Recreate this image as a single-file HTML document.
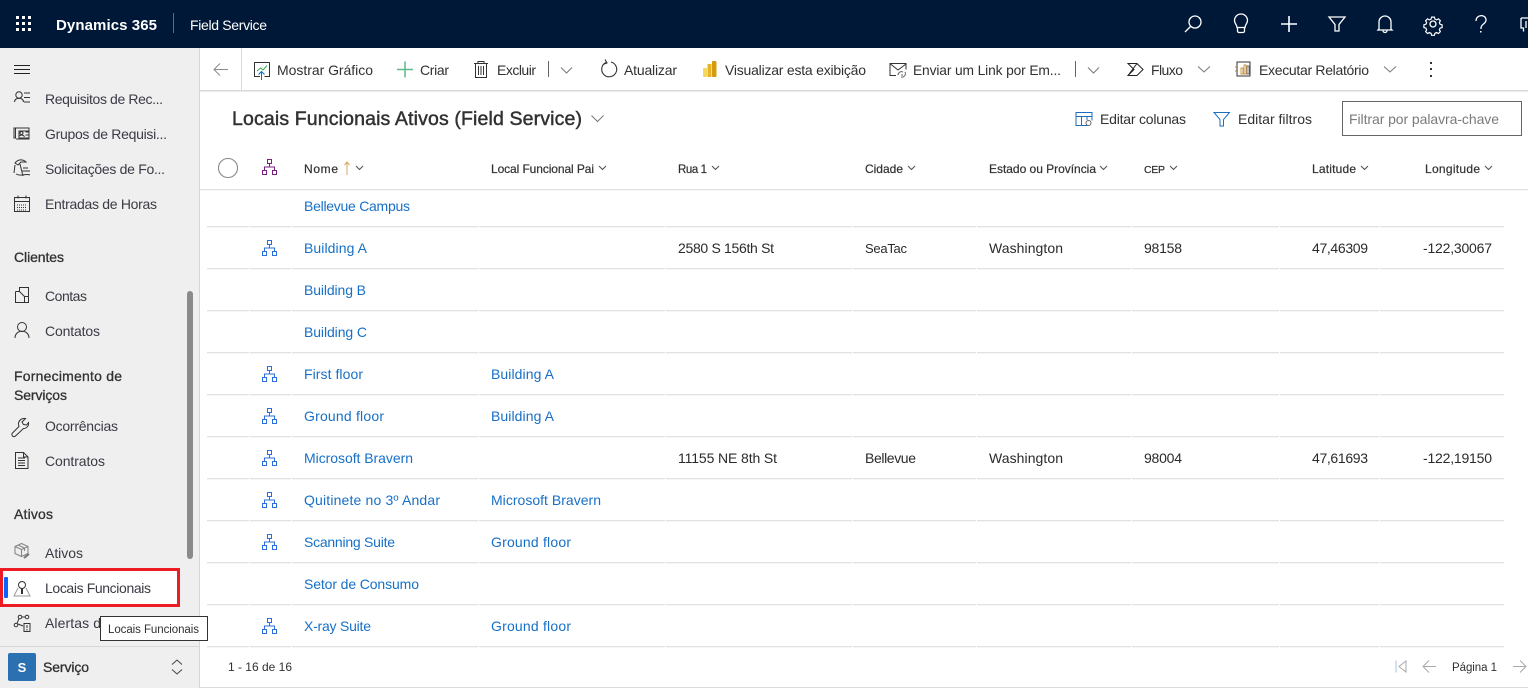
<!DOCTYPE html>
<html lang="pt-BR">
<head>
<meta charset="utf-8">
<title>Locais Funcionais Ativos (Field Service)</title>
<style>
html,body{margin:0;padding:0;width:1528px;height:688px;overflow:hidden;background:#fff}
svg{display:block}
text{font-family:"Liberation Sans",sans-serif;font-size:14px;fill:#323130;white-space:pre}
.nav{fill:#3b3a45}
.sec{fill:#323130;stroke:#323130;stroke-width:.3}
.lnk{fill:#1770c7}
.th{font-size:12px;stroke:#323130;stroke-width:.2}
.cell{fill:#2b2a29}
.ic{fill:none;stroke:#333;stroke-width:1}
.w{fill:none;stroke:#fff;stroke-width:1.3}
.chev{fill:none;stroke:#777;stroke-width:1}
.chd{fill:none;stroke:#555;stroke-width:1.1}
</style>
</head>
<body>
<svg width="1528" height="688" viewBox="0 0 1528 688" xmlns="http://www.w3.org/2000/svg">
<defs>
<symbol id="h" viewBox="0 0 16 16" overflow="visible">
<path fill="none" stroke="currentColor" stroke-width="1" d="M5.5 .5h4v4h-4zM.5 11.5h4v4h-4zM10.5 11.5h4v4h-4zM7.5 4.5v3.5M2.5 11.5V8h10v3.5"/>
</symbol>
</defs>

<!-- top bar -->
<rect width="1528" height="48" fill="#001838"/>
<g fill="#fff">
<rect x="16" y="16" width="3" height="3"/><rect x="22" y="16" width="3" height="3"/><rect x="28" y="16" width="3" height="3"/>
<rect x="16" y="22" width="3" height="3"/><rect x="22" y="22" width="3" height="3"/><rect x="28" y="22" width="3" height="3"/>
<rect x="16" y="28" width="3" height="3"/><rect x="22" y="28" width="3" height="3"/><rect x="28" y="28" width="3" height="3"/>
</g>
<text x="56" y="30" style="font-size:15px;fill:#fff;font-weight:700" textLength="101">Dynamics 365</text>
<rect x="173" y="13" width="1" height="20" fill="#5d6b80"/>
<text x="190" y="30" style="fill:#fff" textLength="77">Field Service</text>
<!-- header icons -->
<circle cx="1195" cy="22" r="6" class="w"/><path class="w" d="M1190.5 26.5L1185 32"/>
<path class="w" d="M1237 27c0-3-2.500-3.500-2.500-7a6.500 6.500 0 0 1 13 0c0 3.500-2.500 4-2.500 7zM1237.500 27v3.500a1.500 1.500 0 0 0 1.500 1.500h4a1.500 1.500 0 0 0 1.500-1.500v-3.500" transform="translate(0 .5)"/>
<path d="M1281 24h16M1289 16v16" fill="none" stroke="#fff" stroke-width="1.6"/>
<path class="w" d="M1329 17h16l-6 7.500V31h-4v-6.500z"/>
<path class="w" d="M1379 29v-7a6 6 0 0 1 12 0v7l1 1h-14zM1383 30.500a2 2 0 0 0 4 0"/>
<g class="w" transform="translate(1433 24)">
<circle r="3"/>
<path d="M-1.500-7.500h3l.6 2.200 1.800.8 2-1.100 2.100 2.100-1.100 2 .8 1.800 2.200.6v3l-2.200.6-.8 1.800 1.100 2-2.100 2.100-2-1.100-1.800.8-.6 2.200h-3l-.6-2.200-1.800-.8-2 1.100-2.100-2.100 1.100-2-.8-1.800-2.200-.6v-3l2.200-.6.8-1.800-1.100-2 2.100-2.100 2 1.100 1.800-.8z" transform="scale(.92)"/>
</g>
<path class="w" d="M1476 21c0-7 10-7 10-1 0 4-5 4-5 8v1"/><rect x="1480" y="31" width="1.500" height="1.500" fill="#fff"/>
<path class="w" d="M1521 18h7M1521 18v10h2.500v3.500"/><path class="w" d="M1526 21v7"/>

<!-- sidebar -->
<rect x="0" y="48" width="199" height="640" fill="#efefef"/>
<rect x="199" y="48" width="1" height="640" fill="#d6d6d6"/>
<path d="M14 65.500h16M14 69.500h16M14 73.500h16" stroke="#222" stroke-width="1" fill="none"/>

<g class="ic">
<circle cx="19" cy="95" r="3.200"/><path d="M14.500 102c0-5 9-5 9 0M24 93h6M24 97.500h6M24 102h6"/>
<path d="M15.500 128v10h-1.500v-10h15v11h-13M19 131h10v7h-10z"/><circle cx="21.500" cy="133" r="1.500"/><path d="M18.800 137c0-2.500 5.500-2.500 5.500 0M25.500 132h3M25.500 135h3"/>
<path d="M15 163c3-4 8-4 11-1l-5 0-3 3zM20 164l3 12M15 165l-1 8M16 174c5 3 10-1 14 1M22 171h8M23 168h5"/>
<rect x="14.500" y="197.500" width="15" height="14"/><path d="M14.500 201.500h15M18 195.500v3M26 195.500v3"/>
<path d="M17 205h10M17 207.500h10M17 210h10" stroke-dasharray="1 1"/>
<path d="M15.500 291.500v11h13v-15h-9v4M15.500 291.500h4l5 5v6M24.500 296.500h4"/>
<circle cx="22" cy="327" r="4.500"/><path d="M15 338c0-9 14-9 14 0"/>
<path d="M19 423.500a6 6 0 0 1 7-4.500l-3.500 3.500 1.500 2.500 3 .5 2-2.500c.5 3-1.500 6-5 6l-8 7.500c-2 2-5-1-3-3l6.500-6.500c-.5-1-.5-2-.5-3z" transform="translate(-.5 -.5)"/>
<path d="M15.500 452.500h8l4.500 4.500v11.500h-12.500zM23.500 452.500v4.500h4.500M18 458h7M18 460.500h7M18 463h7M18 465.500h7"/>
</g>
<g stroke="#888" fill="none" stroke-width="1.100">
<path d="M15 546.500l6.500-3 6.500 3v7l-6.500 3-6.500-3zM15 546.500l6.500 3 6.500-3M21.500 549.500v7M18 545l6.500 3v3"/>
</g>
<path d="M24 558l5-4" stroke="#777" stroke-width="2" fill="none"/>

<g class="nav">
<text class="nav" x="45" y="104" textLength="118">Requisitos de Rec...</text>
<text class="nav" x="45" y="139" textLength="122">Grupos de Requisi...</text>
<text class="nav" x="45" y="174" textLength="120">Solicitações de Fo...</text>
<text class="nav" x="45" y="209" textLength="112">Entradas de Horas</text>
<text class="nav" x="45" y="301" textLength="42">Contas</text>
<text class="nav" x="45" y="336" textLength="55">Contatos</text>
<text class="nav" x="45" y="431" textLength="73">Ocorrências</text>
<text class="nav" x="45" y="466" textLength="60">Contratos</text>
<text class="nav" x="45" y="558" textLength="38">Ativos</text>
<text class="nav" x="45" y="628" textLength="56">Alertas d</text>
</g>
<text class="sec" x="14" y="262" textLength="50">Clientes</text>
<text class="sec" x="14" y="381" textLength="108">Fornecimento de</text>
<text class="sec" x="14" y="400" textLength="53">Serviços</text>
<text class="sec" x="14" y="519" textLength="39">Ativos</text>

<rect x="187" y="291" width="6" height="268" rx="3" fill="#8a8a8a"/>

<!-- selected item -->
<rect x="1.500" y="569.500" width="177" height="36" fill="#fff" stroke="#ed1c24" stroke-width="3"/>
<rect x="4" y="577" width="4" height="21" rx="1" fill="#0f62fe"/>
<circle cx="22" cy="585" r="3.500" fill="none" stroke="#333"/>
<path d="M22 588v6" stroke="#333" stroke-width="2"/>
<path d="M18 588l-4 8h16l-4-8" fill="none" stroke="#999"/>
<text class="nav" x="45" y="593" textLength="106">Locais Funcionais</text>

<!-- alert icon -->
<g class="ic">
<circle cx="16" cy="625" r="1.800"/><circle cx="20" cy="617" r="1.800"/><circle cx="27" cy="617" r="1.800"/>
<path d="M17 623.500l2-5M21.500 617h4M18 624l5 2"/>
<rect x="24" y="623.500" width="6" height="8"/><path d="M27 625v3M27 629v1.500"/>
</g>

<rect x="0" y="646" width="199" height="1" fill="#d8d8d8"/>
<rect x="8" y="653" width="28" height="28" rx="2" fill="#2b70b0"/>
<text x="22" y="672" text-anchor="middle" style="fill:#fff;font-size:13px;font-weight:700">S</text>
<text class="sec" x="43" y="672" textLength="46">Serviço</text>
<path d="M172 664.500l5-4.500 5 4.500M172 669.500l5 4.500 5-4.500" fill="none" stroke="#444"/>

<!-- tooltip -->
<rect x="100.500" y="616.500" width="107" height="24" fill="#fff" stroke="#333"/>
<text x="108" y="633" style="font-size:11.500px" textLength="91">Locais Funcionais</text>

<!-- toolbar -->
<rect x="200" y="90" width="1328" height="1.500" fill="#d9d9d9"/>
<rect x="241" y="48" width="1" height="42" fill="#d9d9d9"/>
<path d="M228 69.500h-14M220 63.500l-6 6 6 6" fill="none" stroke="#8a8a8a"/>

<path class="ic" d="M260 76.500h-5.500v-14h15v14h-5"/>
<path d="M257 71l3.500-3 2.500 2 4-4.500" fill="none" stroke="#3aa655"/>
<path d="M261.500 80v-8M258.500 74.500l3-3 3 3" fill="none" stroke="#106ebe"/>
<text x="277" y="75" textLength="96">Mostrar Gráfico</text>

<path d="M397 69.500h16M405 61.500v16" fill="none" stroke="#5cb98a" stroke-width="1.500"/>
<text x="420" y="75" textLength="29">Criar</text>

<path class="ic" d="M474 63.500h14M478 63.500v-2h6v2M475.500 63.500h11v14h-11zM478.500 66v9M481 66v9M483.500 66v9"/>
<text x="497" y="75" textLength="39">Excluir</text>
<rect x="548" y="61" width="1" height="16" fill="#666"/>
<path class="chev" d="M561 67.500l5.500 5.500 5.500-5.500"/>

<path d="M606 62.500a7.500 7.500 0 1 0 5 -.5M605 59.500l2 3.500-4 1.500" fill="none" stroke="#333" stroke-width="1.100"/>
<text x="624" y="75" textLength="53">Atualizar</text>

<rect x="703" y="68" width="4" height="9" rx="1" fill="#f5d95f"/>
<rect x="707.500" y="64" width="4" height="13" fill="#e8b32a"/>
<rect x="712" y="61" width="4.500" height="16" rx="1" fill="#d59b0c"/>
<text x="725" y="75" textLength="141">Visualizar esta exibição</text>

<path class="ic" d="M896 75.500h-6v-12h16v6M890.500 64l7.500 6 8-6"/>
<path d="M898 75a3.500 3.500 0 0 1 5-3M905 72a3.500 3.500 0 0 1-4 5M901 75h2" fill="none" stroke="#666"/>
<text x="913" y="75" style="font-size:13.800px" textLength="148">Enviar um Link por Em...</text>
<rect x="1075" y="61" width="1" height="16" fill="#666"/>
<path class="chev" d="M1088 67.500l5.500 5.500 5.500-5.500"/>

<path class="ic" style="stroke:#222" d="M1128 63.500h9l6 6-6 6h-9l6-6zM1128 75.500l9-12"/>
<text x="1151" y="75" textLength="32">Fluxo</text>
<path class="chev" d="M1198 66.500l6 5.500 6-5.500"/>

<rect x="1237" y="62" width="13" height="14" fill="none" stroke="#333"/>
<path d="M1235 67h3M1235 71h3" stroke="#b58a2c"/>
<rect x="1241" y="68" width="2" height="6" fill="none" stroke="#c27c1a" stroke-width=".8"/>
<rect x="1244" y="65" width="2" height="9" fill="none" stroke="#c27c1a" stroke-width=".8"/>
<rect x="1247" y="66" width="2" height="8" fill="none" stroke="#555" stroke-width=".8"/>
<text x="1259" y="75" textLength="110">Executar Relatório</text>
<path class="chev" d="M1384 66.500l6 5.500 6-5.500"/>
<g fill="#333"><rect x="1430" y="62" width="2" height="2"/><rect x="1430" y="68" width="2" height="2"/><rect x="1430" y="75" width="2" height="2"/></g>

<!-- view title -->
<text x="232" y="125" style="font-size:19.500px;stroke:#323130;stroke-width:.45" textLength="350">Locais Funcionais Ativos (Field Service)</text>
<path class="chev" d="M591.500 115.500l6 6 6-6"/>

<g fill="none" stroke="#1c6fbf">
<path d="M1088 125.500h-12v-13h16v8M1076.500 116.500h15M1081.500 117v8M1087 117v3"/>
</g>
<circle cx="1088.500" cy="123" r="2.500" fill="none" stroke="#666"/>
<text x="1100" y="124" textLength="86">Editar colunas</text>
<path d="M1214 112.500h15.500l-6 7v6.500h-3.500v-6.500z" fill="none" stroke="#1c6fbf"/>
<text x="1238" y="124" textLength="74">Editar filtros</text>
<rect x="1342.500" y="101.500" width="179" height="34" fill="#fff" stroke="#666"/>
<text x="1349" y="124" style="fill:#7a7a7a" textLength="150">Filtrar por palavra-chave</text>

<!-- grid header -->
<circle cx="228" cy="168" r="9.500" fill="#fff" stroke="#888" stroke-width="1.100"/>
<use href="#h" x="262" y="159" width="16" height="16" style="color:#7b1f82"/>
<text class="th" x="304" y="173" textLength="34">Nome</text>
<path d="M347 175v-13M344.500 165l2.500-3 2.500 3" fill="none" stroke="#d9a45e"/>
<text class="th" x="491" y="173" textLength="103">Local Funcional Pai</text>
<text class="th" x="678" y="173" style="font-size:11.500px" textLength="29">Rua 1</text>
<text class="th" x="865" y="173" textLength="38">Cidade</text>
<text class="th" x="989" y="173" textLength="107">Estado ou Província</text>
<text class="th" x="1144" y="173" style="font-size:10.500px" textLength="21">CEP</text>
<text class="th" x="1312" y="173" textLength="44">Latitude</text>
<text class="th" x="1425" y="173" textLength="55">Longitude</text>
<g class="chd">
<path d="M356 166l3.500 3.500 3.500-3.500M599 166l3.500 3.500 3.500-3.500M712 166l3.500 3.500 3.500-3.500M908 166l3.500 3.500 3.500-3.500M1100 166l3.500 3.500 3.500-3.500M1170 166l3.500 3.500 3.500-3.500M1361 166l3.500 3.500 3.500-3.500M1485 166l3.500 3.500 3.500-3.500"/>
</g>
<rect x="200" y="189" width="1328" height="1.300" fill="#e1e1e1"/>

<!-- row lines -->
<g fill="#e1e1e1">
<rect x="207" y="226" width="1297" height="1.300"/>
<rect x="207" y="268" width="1297" height="1.300"/>
<rect x="207" y="310" width="1297" height="1.300"/>
<rect x="207" y="352" width="1297" height="1.300"/>
<rect x="207" y="394" width="1297" height="1.300"/>
<rect x="207" y="436" width="1297" height="1.300"/>
<rect x="207" y="478" width="1297" height="1.300"/>
<rect x="207" y="520" width="1297" height="1.300"/>
<rect x="207" y="562" width="1297" height="1.300"/>
<rect x="207" y="604" width="1297" height="1.300"/>
<rect x="207" y="646" width="1297" height="1.300"/>
</g>
<g fill="#fff">
<rect x="249" y="220" width="1" height="430"/><rect x="291" y="220" width="1" height="430"/><rect x="478" y="220" width="1" height="430"/>
<rect x="665" y="220" width="1" height="430"/><rect x="852" y="220" width="1" height="430"/><rect x="976" y="220" width="1" height="430"/>
<rect x="1131" y="220" width="1" height="430"/><rect x="1279" y="220" width="1" height="430"/><rect x="1379" y="220" width="1" height="430"/>
</g>

<!-- row icons -->
<g style="color:#2a6fdb">
<use href="#h" x="262" y="240" width="16" height="16"/>
<use href="#h" x="262" y="366" width="16" height="16"/>
<use href="#h" x="262" y="408" width="16" height="16"/>
<use href="#h" x="262" y="450" width="16" height="16"/>
<use href="#h" x="262" y="492" width="16" height="16"/>
<use href="#h" x="262" y="534" width="16" height="16"/>
<use href="#h" x="262" y="618" width="16" height="16"/>
</g>

<!-- names -->
<text class="lnk" x="304" y="211" textLength="106">Bellevue Campus</text>
<text class="lnk" x="304" y="253" textLength="63">Building A</text>
<text class="lnk" x="304" y="295" textLength="62">Building B</text>
<text class="lnk" x="304" y="337" textLength="63">Building C</text>
<text class="lnk" x="304" y="379" textLength="59">First floor</text>
<text class="lnk" x="304" y="421" textLength="80">Ground floor</text>
<text class="lnk" x="304" y="463" textLength="109">Microsoft Bravern</text>
<text class="lnk" x="304" y="505" textLength="136">Quitinete no 3º Andar</text>
<text class="lnk" x="304" y="547" textLength="91">Scanning Suite</text>
<text class="lnk" x="304" y="589" textLength="115">Setor de Consumo</text>
<text class="lnk" x="304" y="631" textLength="67">X-ray Suite</text>
<!-- parents -->
<text class="lnk" x="491" y="379" textLength="63">Building A</text>
<text class="lnk" x="491" y="421" textLength="63">Building A</text>
<text class="lnk" x="491" y="505" textLength="110">Microsoft Bravern</text>
<text class="lnk" x="491" y="547" textLength="80">Ground floor</text>
<text class="lnk" x="491" y="631" textLength="80">Ground floor</text>
<!-- data -->
<text class="cell" x="678" y="253" textLength="96">2580 S 156th St</text>
<text class="cell" x="865" y="253" style="font-size:13px" textLength="42">SeaTac</text>
<text class="cell" x="989" y="253" textLength="74">Washington</text>
<text class="cell" x="1144" y="253" textLength="38">98158</text>
<text class="cell" x="1312" y="253" textLength="56">47,46309</text>
<text class="cell" x="1423" y="253" textLength="69">-122,30067</text>
<text class="cell" x="678" y="463" textLength="99">11155 NE 8th St</text>
<text class="cell" x="865" y="463" textLength="51">Bellevue</text>
<text class="cell" x="989" y="463" textLength="74">Washington</text>
<text class="cell" x="1144" y="463" textLength="38">98004</text>
<text class="cell" x="1312" y="463" textLength="56">47,61693</text>
<text class="cell" x="1423" y="463" textLength="69">-122,19150</text>

<!-- footer -->
<text x="228" y="671" style="font-size:12px" textLength="64">1 - 16 de 16</text>
<path d="M1396 660.500v12" stroke="#a8c4e0" fill="none"/>
<path d="M1406 661l-7 5.500 7 5.500z" fill="none" stroke="#aaa"/>
<path d="M1436 666.500h-13M1429 660.500l-6 6 6 6" fill="none" stroke="#aaa"/>
<text x="1452" y="671" style="font-size:11.500px" textLength="45">Página 1</text>
<path d="M1513 666.500h13M1520 660.500l6 6-6 6" fill="none" stroke="#aaa"/>
<rect x="200" y="687" width="1328" height="1" fill="#dcdcdc"/>
</svg>
</body>
</html>
